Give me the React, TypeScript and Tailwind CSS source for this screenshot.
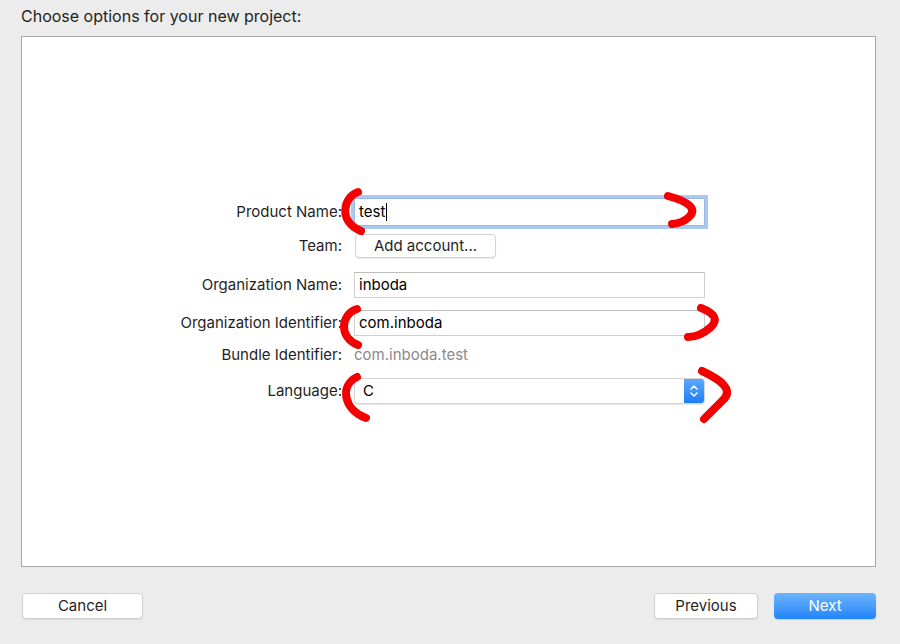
import React from "react";

const font = { fontFamily: "Inter, 'Liberation Sans', Arial, sans-serif" };

function Label({ children }: { children: React.ReactNode }) {
  return (
    <div className="w-[320px] shrink-0 text-right text-[15px] leading-[20px] text-[#1f1f1f]">
      {children}
    </div>
  );
}

export default function App() {
  return (
    <div
      className="relative w-[900px] h-[644px] overflow-hidden bg-[#ececec] flex flex-col"
      style={font}
    >
      <div className="pl-[21px] pt-[6px] h-[26px] text-[16px] leading-[20px] text-[#1f1f1f]">
        Choose options for your new project:
      </div>
      <div className="ml-[21px] mt-[10px] w-[855px] h-[531px] bg-white border border-[#a6a6a6] flex flex-col pt-[161px]">
        {/* Product Name */}
        <div className="flex items-center h-[28px] gap-[12px]">
          <Label>Product Name:</Label>
          <div className="w-[351px] h-[28px] bg-white border border-[#9ab9e6] ring-[3px] ring-[#a9c9f1] flex items-center pl-[4px] text-[15px] text-black">
            test
            <span className="inline-block w-[1px] h-[18px] bg-black ml-[1px]" />
          </div>
        </div>
        {/* Team */}
        <div className="flex items-center h-[24px] gap-[12px] mt-[8px]">
          <Label>Team:</Label>
          <button className="w-[141px] h-[24px] ml-[1px] bg-white border border-[#d2d2d2] rounded-[4px] shadow-[0_1px_1px_rgba(0,0,0,0.08)] text-[15px] text-[#1f1f1f] flex items-center justify-center">
            Add account...
          </button>
        </div>
        {/* Organization Name */}
        <div className="flex items-center h-[26px] gap-[12px] mt-[14px]">
          <Label>Organization Name:</Label>
          <div className="w-[351px] h-[26px] bg-white border border-[#cfcfcf] border-t-[#bdbdbd] flex items-center pl-[4px] text-[15px] text-black">
            inboda
          </div>
        </div>
        {/* Organization Identifier */}
        <div className="flex items-center h-[26px] gap-[12px] mt-[12px]">
          <Label>Organization Identifier:</Label>
          <div className="w-[351px] h-[26px] bg-white border border-[#cfcfcf] border-t-[#bdbdbd] flex items-center pl-[4px] text-[15px] text-black">
            com.inboda
          </div>
        </div>
        {/* Bundle Identifier */}
        <div className="flex items-center h-[20px] gap-[12px] mt-[9px]">
          <Label>Bundle Identifier:</Label>
          <div className="text-[15px] leading-[20px] text-[#8a8a8a]">com.inboda.test</div>
        </div>
        {/* Language */}
        <div className="flex items-center h-[26px] gap-[12px] mt-[13px]">
          <Label>Language:</Label>
          <div className="w-[351px] h-[26px] bg-white border border-[#d4d4d4] rounded-[4px] shadow-[0_1px_1px_rgba(0,0,0,0.1)] flex items-center text-[15px] text-black overflow-hidden">
            <div className="flex-1 pl-[8px]">C</div>
            <div className="w-[20px] h-full bg-gradient-to-b from-[#5aa8fb] to-[#1a7ef6] flex items-center justify-center">
              <svg width="10" height="16" viewBox="0 0 10 16" fill="none">
                <path d="M2 6 L5 3 L8 6" stroke="white" strokeWidth="1.5" strokeLinecap="round" strokeLinejoin="round" />
                <path d="M2 10 L5 13 L8 10" stroke="white" strokeWidth="1.5" strokeLinecap="round" strokeLinejoin="round" />
              </svg>
            </div>
          </div>
        </div>
      </div>
      {/* Buttons */}
      <div className="flex items-center mt-[26px] px-[22px] h-[26px]">
        <button className="w-[121px] h-[26px] bg-white border border-[#d0d0d0] rounded-[4px] shadow-[0_1px_1px_rgba(0,0,0,0.08)] text-[15px] text-[#1f1f1f]">
          Cancel
        </button>
        <div className="flex-1" />
        <button className="w-[104px] h-[26px] bg-white border border-[#d0d0d0] rounded-[4px] shadow-[0_1px_1px_rgba(0,0,0,0.08)] text-[15px] text-[#1f1f1f]">
          Previous
        </button>
        <button className="ml-[16px] mr-[2px] w-[102px] h-[26px] rounded-[4px] bg-gradient-to-b from-[#6cb4fb] to-[#1f84fb] shadow-[0_1px_1px_rgba(0,0,0,0.12)] text-[15px] text-white">
          Next
        </button>
      </div>
      {/* Red annotation marks */}
      <svg
        className="absolute inset-0 pointer-events-none"
        width="900"
        height="644"
        viewBox="0 0 900 644"
        fill="none"
      >
        <g stroke="#f40000" strokeWidth="8" strokeLinecap="round" strokeLinejoin="round">
          <path d="M358 192 C 343 197, 338 222, 361 231" />
          <path d="M668 196 Q 701 205 689 217 Q 683 223 672 224" />
          <path d="M357 309 C 341 314, 338 337, 358 345" />
          <path d="M701 308 Q 722 316 711 327 Q 700 337 688 337" />
          <path d="M357 377 C 339 386, 344 410, 366 418" />
          <path d="M702 371 Q 737 387 723 400 Q 713 410 704 419" />
        </g>
      </svg>
    </div>
  );
}
